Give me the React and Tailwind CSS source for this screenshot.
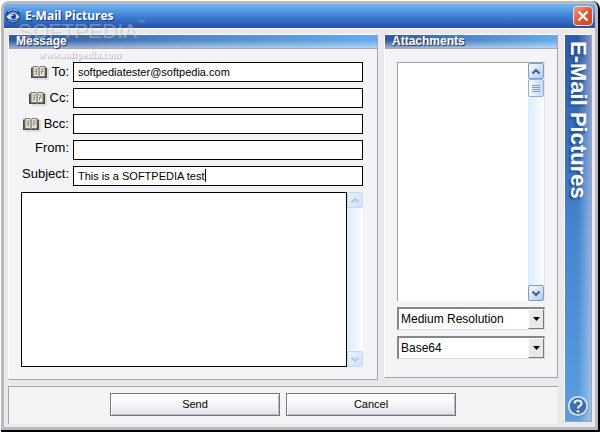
import React from 'react';
import clsx from 'clsx';

const fields = [
  { id: 'to', label: 'To:', value: 'softpediatester@softpedia.com', book: true },
  { id: 'cc', label: 'Cc:', value: '', book: true },
  { id: 'bcc', label: 'Bcc:', value: '', book: true },
  { id: 'from', label: 'From:', value: '' },
  { id: 'subject', label: 'Subject:', value: 'This is a SOFTPEDIA test', caret: true },
];

const EyeLogo = () => (
  <svg width="16" height="16" viewBox="0 0 16 16" aria-hidden="true">
    <defs>
      <radialGradient id="ball" cx="50%" cy="40%" r="60%">
        <stop offset="0" stopColor="#a9cdf2" />
        <stop offset="0.6" stopColor="#3568b4" />
        <stop offset="1" stopColor="#14305f" />
      </radialGradient>
    </defs>
    <circle cx="8" cy="8" r="7.6" fill="url(#ball)" />
    <path d="M2 6C4 2.500 10 1.500 14 5.500" fill="none" stroke="#16386e" strokeWidth="1.400" />
    <path d="M3 4C5 1.500 10 1 12.500 3.500" fill="none" stroke="#b9d7f5" strokeWidth="1" />
    <path d="M1.500 9C4 5 11 4.500 14.500 8.500C12 12.500 5 13 1.500 9Z" fill="#d7e8fa" />
    <circle cx="8.500" cy="8.500" r="2.700" fill="#2a5ca8" />
    <circle cx="8.500" cy="8.500" r="1.200" fill="#0c2247" />
    <circle cx="7.300" cy="7.300" r="0.900" fill="#fff" />
    <path d="M3 12C6 14.500 10 14.500 13 11.500" fill="none" stroke="#86b3e4" strokeWidth="1" />
  </svg>
);

const BookIcon = () => (
  <svg width="18" height="15" viewBox="0 0 18 15" aria-hidden="true">
    <path d="M2 3h16v12H3z" fill="#dcdbe0" />
    <path d="M0 2.500h16v10.500H0z" fill="#4a4a48" />
    <path d="M2 1.500h5l1 1 1-1h5v10H9l-1 1-1-1H2z" fill="#ece6d4" stroke="#7b7a74" strokeWidth="1" />
    <path d="M8 2.500v9.500" stroke="#55554f" />
    <path d="M3.500 4h3M5.500 4v5M3.500 6.500h2M3.500 9h2M9.500 4h3M11.500 4v2.500M9.500 6.500h3M10.500 6.500v3" stroke="#918f85" fill="none" />
  </svg>
);

const Chevron = ({ down }) => (
  <svg width="10" height="7" viewBox="0 0 10 7" aria-hidden="true">
    <path d={down ? 'M1.500 1.500L5 5L8.500 1.500' : 'M1.500 5.500L5 2L8.500 5.500'} fill="none" stroke="currentColor" strokeWidth="2.200" />
  </svg>
);

const ScrollBar = ({ disabled, name }) => {
  const button = clsx(
    'flex h-4 w-4 shrink-0 items-center justify-center rounded-xs border bg-linear-to-br',
    disabled
      ? 'border-[#c3daf2] from-[#e6f0fc] to-[#d2e3f8] text-[#b3cbe8]'
      : 'border-[#7b9cc9] from-[#f6faff] to-[#b4cdec] text-[#4d5e7c]'
  );
  return (
    <div className="flex w-4 shrink-0 flex-col bg-linear-to-r from-[#dcedfa] to-[#fbfdff]">
      <button type="button" aria-label={`Scroll ${name} up`} className={button}>
        <Chevron />
      </button>
      {!disabled && (
        <div className="flex h-[18px] w-4 flex-col items-center justify-center gap-px rounded-xs border border-[#8fb0da] bg-linear-to-r from-[#f4f9fe] to-[#c3daf4]">
          <span className="h-px w-2 bg-[#7f97b8]" />
          <span className="h-px w-2 bg-[#7f97b8]" />
          <span className="h-px w-2 bg-[#7f97b8]" />
          <span className="h-px w-2 bg-[#7f97b8]" />
        </div>
      )}
      <div className="flex-1" />
      <button type="button" aria-label={`Scroll ${name} down`} className={button}>
        <Chevron down />
      </button>
    </div>
  );
};

const PanelHeader = ({ children }) => (
  <div className="border-b border-[#a3a6ad] bg-linear-to-r from-[#33589c] via-[#4f88c8] to-[#66aaee]">
    <h2 className="h-[13px] bg-linear-to-b from-[#ffffff00] from-40% to-[#ffffff80] pl-[7px] text-[12px] leading-[13px] font-bold text-white [text-shadow:1px_1px_1px_#1c2d50]">
      {children}
    </h2>
  </div>
);

const Field = ({ id, label, value, book, caret }) => (
  <div className="flex gap-1">
    <label
      htmlFor={id}
      className={clsx('flex w-12 shrink-0 items-center justify-end gap-[3px] text-[13px] whitespace-nowrap', book ? 'h-5' : 'h-4')}
    >
      {book && <BookIcon />}
      {label}
    </label>
    <div className="relative flex-1">
      <input
        id={id}
        type="text"
        defaultValue={value}
        className="block h-5 w-full border border-black bg-white px-1 text-[11px] text-black outline-none"
      />
      {caret && <span className="absolute top-[3px] left-[132px] h-[13px] w-px bg-black" />}
    </div>
  </div>
);

const DropDown = ({ label, value, options }) => (
  <div className="relative">
    <select
      aria-label={label}
      defaultValue={value}
      className="block h-[23px] w-full appearance-none border-t-2 border-r border-b border-l-2 border-t-[#87878a] border-r-[#dcdce0] border-b-[#dcdce0] border-l-[#87878a] bg-white pl-[2px] text-[12px] text-black outline-none"
    >
      {options.map((o) => (
        <option key={o}>{o}</option>
      ))}
    </select>
    <span className="pointer-events-none absolute top-[2px] right-px flex h-5 w-4 items-center justify-center border border-t-white border-r-[#77777a] border-b-[#77777a] border-l-white bg-[#e9e8ec]">
      <svg width="7" height="4" viewBox="0 0 7 4" aria-hidden="true">
        <path d="M0 0h7L3.500 4z" fill="#000" />
      </svg>
    </span>
  </div>
);

const ActionButton = ({ children }) => (
  <button
    type="button"
    className="h-[23px] w-[170px] border border-[#77777b] bg-linear-to-b from-white from-20% to-[#e4e3e9] text-[11px] text-black shadow-[inset_1px_1px_0_#fff,inset_-1px_-1px_0_#bdbcc2]"
  >
    {children}
  </button>
);

const Watermark = () => (
  <div className="pointer-events-none absolute top-[14px] left-[17px] text-white/30" aria-hidden="true">
    <div className="flex items-start text-[21px] leading-[32px] [text-shadow:1px_1px_1px_#77777744]">
      SOFTPEDIA<span className="text-[8px] leading-[16px]">™</span>
    </div>
    <div className="pl-5 font-['Liberation_Serif',serif] text-[10px] leading-4 font-bold text-white/90 [text-shadow:1px_1px_1px_#a8a8b0]">
      www.softpedia.com
    </div>
  </div>
);

export default function App() {
  return (
    <div className="flex min-h-screen bg-white font-['Liberation_Sans',Arial,sans-serif] text-black">
      <div className="relative mt-px ml-px flex flex-1 flex-col rounded-t-lg border-r-2 border-b-2 border-black bg-[#b9bac0] p-[3px]">
        <header className="flex h-6 items-center rounded-t-sm bg-linear-to-b from-[#78b6f0] via-[#3f86d8] via-45% to-[#2950a8] pr-[2px] pl-px">
          <EyeLogo />
          <h1 className="flex-1 pl-1 font-['Open_Sans',sans-serif] text-[12px] font-bold text-white [text-shadow:1px_1px_0_#1d3c80]">
            E-Mail Pictures
          </h1>
          <button
            type="button"
            aria-label="Close"
            className="flex h-5 w-5 items-center justify-center rounded-sm border border-[#f3d9d2] bg-linear-to-br from-[#ee9a80] via-[#dd5a38] to-[#c8482a]"
          >
            <svg width="12" height="12" viewBox="0 0 12 12" aria-hidden="true">
              <path d="M1.500 1.500L10.500 10.500M10.500 1.500L1.500 10.500" stroke="#fff" strokeWidth="2.200" />
            </svg>
          </button>
        </header>

        <main className="flex flex-1 gap-[6px] border-t border-white bg-[#eae8ed] pt-[5px] pr-[3px] pb-[3px] pl-1">
          <div className="flex flex-1 flex-col gap-[6px]">
            <div className="flex flex-1 gap-[6px]">
              <section className="flex flex-1 flex-col border border-t-white border-r-[#a4a4aa] border-b-[#a4a4aa] border-l-white bg-[#f4f4f7]">
                <PanelHeader>Message</PanelHeader>
                <div className="flex flex-1 flex-col gap-[6px] pt-[13px] pr-[14px] pb-3 pl-3">
                  {fields.map((f) => (
                    <Field key={f.id} {...f} />
                  ))}
                  <div className="flex flex-1">
                    <textarea aria-label="Message text" className="flex-1 resize-none border border-black bg-white p-1 text-[11px] outline-none" />
                    <ScrollBar disabled name="message" />
                  </div>
                </div>
              </section>

              <section className="mb-[2px] flex w-[174px] flex-col border border-t-white border-r-[#a4a4aa] border-b-[#a4a4aa] border-l-white bg-[#f4f4f7]">
                <PanelHeader>Attachments</PanelHeader>
                <div className="flex flex-1 flex-col gap-[6px] pt-[13px] pr-3 pb-[18px] pl-3">
                  <div className="flex flex-1 border-t border-r border-l border-t-[#a0a0a4] border-r-[#e8e8ec] border-l-[#a0a0a4] bg-white">
                    <div role="listbox" aria-label="Attachments" className="flex-1" />
                    <ScrollBar name="attachments" />
                  </div>
                  <DropDown label="Resolution" value="Medium Resolution" options={['Low Resolution', 'Medium Resolution', 'High Resolution']} />
                  <DropDown label="Encoding" value="Base64" options={['Base64', 'UUEncode']} />
                </div>
              </section>
            </div>

            <footer className="flex h-[38px] items-start justify-center gap-[6px] border-t border-l border-[#a4a4aa] bg-[#f4f4f7] pt-[6px] pr-px">
              <ActionButton>Send</ActionButton>
              <ActionButton>Cancel</ActionButton>
            </footer>
          </div>

          <aside className="mb-[2px] flex w-7 border border-t-white border-r-[#a4a4aa] border-b-[#a4a4aa] border-l-white bg-linear-to-b from-[#2f5aa5] via-[#4584d0] to-[#5a9ee0]">
            <div className="flex flex-1 flex-col items-center justify-between bg-linear-to-r from-[#ffffff00] from-50% to-[#ffffff60] pt-[6px] pb-1">
              <div className="text-[22px] leading-[26px] font-bold whitespace-nowrap text-white [text-shadow:2px_2px_2px_#2b4f8f] [writing-mode:vertical-rl]">
                E-Mail Pictures
              </div>
              <button type="button" aria-label="Help">
                <svg width="22" height="22" viewBox="0 0 22 22" aria-hidden="true">
                  <circle cx="11.800" cy="11.800" r="9.800" fill="#3d6496" opacity="0.600" />
                  <circle cx="11" cy="11" r="9.200" fill="#3f6eae" stroke="#dbe4ee" strokeWidth="1.800" />
                  <path d="M7.500 8.500C7.500 4.500 14.500 4.500 14.500 8.500C14.500 11 11 10.800 11 13.500" fill="none" stroke="#e6eef8" strokeWidth="2.200" />
                  <circle cx="11" cy="16.300" r="1.400" fill="#e6eef8" />
                </svg>
              </button>
            </div>
          </aside>
        </main>
        <Watermark />
      </div>
    </div>
  );
}
